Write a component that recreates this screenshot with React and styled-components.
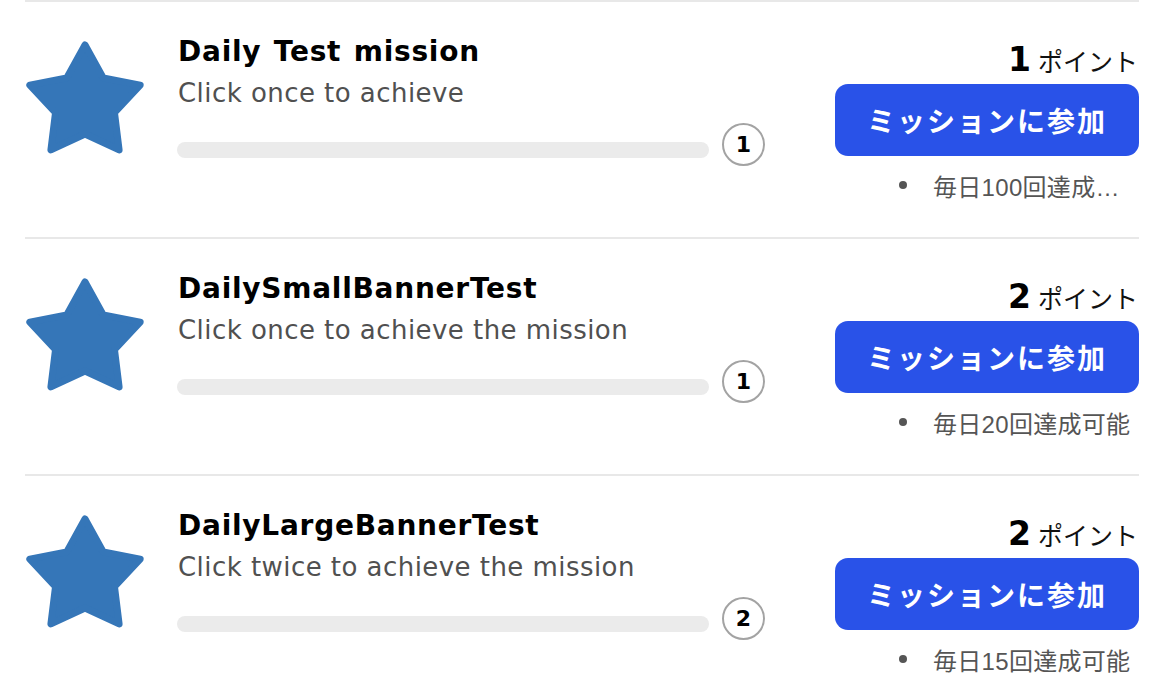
import React from "react";
import styled, { createGlobalStyle } from "styled-components";

const Global = createGlobalStyle`
  html, body { margin: 0; padding: 0; background: #fff; }
  body { font-family: "DejaVu Sans", "Noto Sans CJK JP", sans-serif; }
`;

const List = styled.div`
  margin-left: 25px;
  width: 1114px;
`;

const Row = styled.div`
  display: flex;
  align-items: flex-start;
  height: 235px;
  border-top: 2px solid #e8e8e8;
`;

const StarBox = styled.svg`
  flex: none;
  width: 120px;
  height: 120px;
  margin-top: 33px;
  overflow: visible;
`;

const Main = styled.div`
  flex: 1;
  min-width: 0;
  margin-left: 33px;
  padding-top: 33px;
`;

const Title = styled.div`
  font-size: 28px;
  line-height: 34px;
  font-weight: bold;
  letter-spacing: 0.75px;
  word-spacing: 2px;
  color: #000;
  white-space: nowrap;
`;

const Desc = styled.div`
  margin-top: 7px;
  font-size: 26px;
  line-height: 34px;
  letter-spacing: 0.45px;
  color: #505050;
  white-space: nowrap;
`;

const Progress = styled.div`
  display: flex;
  align-items: flex-start;
  gap: 13px;
  margin-top: 13px;
`;

const Track = styled.div`
  flex: 1;
  height: 16px;
  margin-top: 19px;
  border-radius: 8px;
  background: #ebebeb;
  margin-left: -1px;
`;

const Count = styled.div`
  flex: none;
  width: 39px;
  height: 39px;
  border: 2px solid #a3a3a3;
  border-radius: 50%;
  display: flex;
  align-items: center;
  justify-content: center;
  font-size: 22px;
  font-weight: bold;
  color: #000;
`;

const Side = styled.div`
  flex: none;
  width: 304px;
  margin-left: 70px;
  padding-top: 37px;
`;

const Points = styled.div`
  text-align: right;
  height: 42px;
  line-height: 42px;
  padding-right: 1px;
  margin-bottom: 3px;
  white-space: nowrap;
`;

const PointNum = styled.span`
  font-family: "DejaVu Sans", sans-serif;
  font-size: 33px;
  font-weight: bold;
  color: #000;
`;

const PointUnit = styled.span`
  font-family: "Noto Sans CJK JP", sans-serif;
  font-size: 25px;
  color: #111;
  margin-left: 7px;
`;

const JoinButton = styled.button`
  display: flex;
  align-items: center;
  justify-content: center;
  width: 304px;
  height: 72px;
  border: none;
  border-radius: 13px;
  background: #2952e8;
  color: #fff;
  font-family: "Noto Sans CJK JP", sans-serif;
  font-size: 28px;
  font-weight: bold;
  letter-spacing: 2px;
  cursor: pointer;
  padding: 0;
`;

const Notes = styled.ul`
  list-style: none;
  margin: 12px 0 0 0;
  padding: 0 0 0 64px;
`;

const Note = styled.li`
  display: flex;
  align-items: center;
  height: 34px;
  color: #555;
  font-family: "Liberation Sans", "Noto Sans CJK JP", sans-serif;
  font-size: 24px;
  letter-spacing: 0.3px;
`;

const Dot = styled.span`
  flex: none;
  width: 8px;
  height: 8px;
  border-radius: 50%;
  background: #555;
  margin-right: 26px;
`;

const NoteText = styled.span`
  flex: 1;
  min-width: 0;
  overflow: hidden;
  white-space: nowrap;
  text-overflow: ellipsis;
`;

function starPoints(cx, cy, R, r) {
  const pts = [];
  for (let i = 0; i < 10; i++) {
    const ang = (-90 + i * 36) * (Math.PI / 180);
    const rad = i % 2 === 0 ? R : r;
    pts.push(`${(cx + rad * Math.cos(ang)).toFixed(2)},${(cy + rad * Math.sin(ang)).toFixed(2)}`);
  }
  return pts.join(" ");
}

const Star = () => (
  <StarBox viewBox="0 0 120 120">
    <polygon
      points={starPoints(60, 68, 58, 31)}
      fill="#3576b8"
      stroke="#3576b8"
      strokeWidth="7"
      strokeLinejoin="round"
    />
  </StarBox>
);

const missions = [
  { title: "Daily Test mission", desc: "Click once to achieve", count: 1, points: 1, note: "毎日100回達成可能" },
  { title: "DailySmallBannerTest", desc: "Click once to achieve the mission", count: 1, points: 2, note: "毎日20回達成可能" },
  { title: "DailyLargeBannerTest", desc: "Click twice to achieve the mission", count: 2, points: 2, note: "毎日15回達成可能" },
];

export default function App() {
  return (
    <>
      <Global />
      <List>
        {missions.map((m) => (
          <Row key={m.title}>
            <Star />
            <Main>
              <Title>{m.title}</Title>
              <Desc>{m.desc}</Desc>
              <Progress>
                <Track />
                <Count>{m.count}</Count>
              </Progress>
            </Main>
            <Side>
              <Points>
                <PointNum>{m.points}</PointNum>
                <PointUnit>ポイント</PointUnit>
              </Points>
              <JoinButton>ミッションに参加</JoinButton>
              <Notes>
                <Note>
                  <Dot />
                  <NoteText title={m.note}>{m.note}</NoteText>
                </Note>
              </Notes>
            </Side>
          </Row>
        ))}
      </List>
    </>
  );
}
